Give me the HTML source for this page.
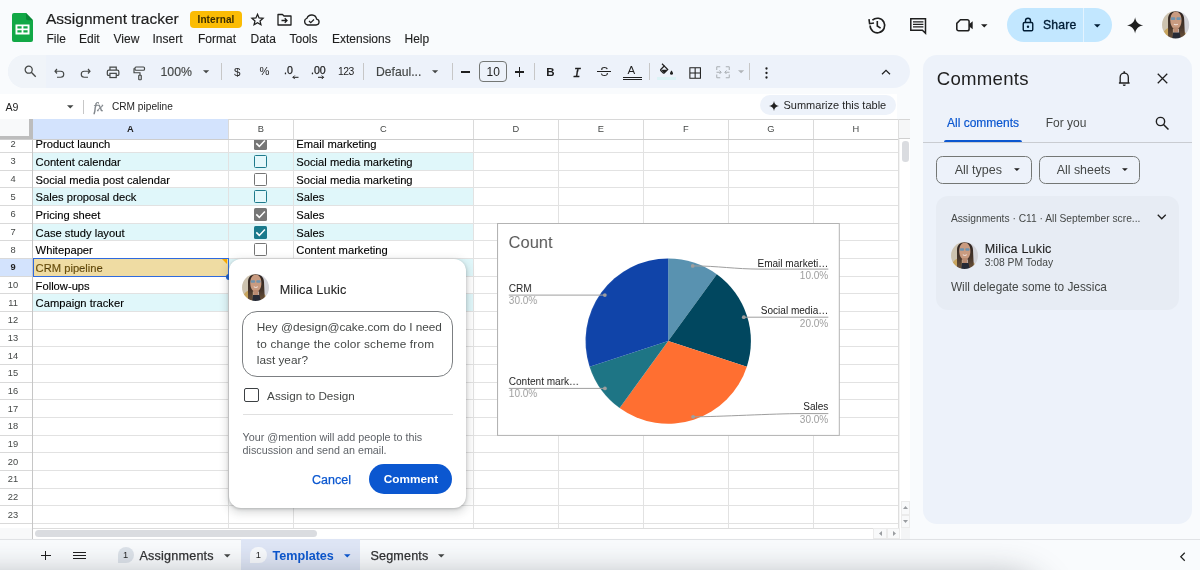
<!DOCTYPE html>
<html><head><meta charset="utf-8"><title>Assignment tracker</title>
<style>
*{box-sizing:border-box;margin:0;padding:0}
html,body{width:1200px;height:570px;overflow:hidden;background:#f9fbfd;font-family:"Liberation Sans",sans-serif;color:#1f1f1f}
.abs{position:absolute}
#app{position:relative;width:1200px;height:570px;overflow:hidden;will-change:transform}
.t{position:absolute;white-space:nowrap;line-height:1}
svg{position:absolute;overflow:visible}
/* header */
#title{left:46px;top:11px;font-size:15.5px;color:#1f1f1f;-webkit-text-stroke:.2px #1f1f1f}
.menu{top:33px;font-size:12px;color:#1f1f1f;-webkit-text-stroke:.12px #1f1f1f}
#badge{left:190px;top:11px;width:52px;height:17px;background:#fbbc04;border-radius:4px}
#badge span{position:absolute;left:0;right:0;top:3.3px;text-align:center;font-size:10px;font-weight:700;color:#3a2c00;letter-spacing:.1px}
/* toolbar */
#toolbar{left:8px;top:55px;width:902px;height:33px;background:#edf2fa;border-radius:17px}
.sep{position:absolute;top:63px;width:1px;height:17px;background:#c7c7c7}
.tb{font-size:11.6px;color:#444746}
/* formula */
#fbar{left:0;top:94px;width:896.5px;height:25px;background:#fff}
/* grid */
#grid{left:0;top:119px;width:910px;height:420px;background:#fff;overflow:hidden}
.colh{position:absolute;top:0;height:20px;border-right:1px solid #d5d5d5;border-bottom:1px solid #c8c8c8;border-top:1px solid #d5d5d5;background:#fff;font-size:9.4px;color:#444746;text-align:center;line-height:19px}
.rowh{position:absolute;left:0;width:33px;border-right:1px solid #c8c8c8;border-bottom:1px solid #d9d9d9;background:#fff;font-size:9.2px;color:#444746;text-align:center}
.hl{position:absolute;left:33px;height:1px;background:#e1e1e1;width:865px}
.vl{position:absolute;top:20px;width:1px;background:#e1e1e1;height:388px}
.band{position:absolute;left:33px;width:440px;background:#e0f7fa}
.ct{position:absolute;font-size:11.2px;color:#000;white-space:nowrap;line-height:1;-webkit-text-stroke:.12px #000}
.cb{position:absolute;width:13px;height:13px;border-radius:2px}
</style></head>
<body><div id="app">
<!--DEFS-->
<svg width="0" height="0" style="left:0;top:0"><defs>
<clipPath id="avc"><circle cx="13.500" cy="13.500" r="13.500"/></clipPath>
<filter id="avb" x="-10%" y="-10%" width="120%" height="120%"><feGaussianBlur stdDeviation=".5"/></filter>
<linearGradient id="avh" x1="0" y1="0" x2="0" y2="1"><stop offset="0" stop-color="#2b221e"/><stop offset=".6" stop-color="#46352b"/><stop offset="1" stop-color="#6b523a"/></linearGradient>
</defs></svg>
<!--/DEFS-->
<!--HEADER-->
<!-- sheets logo -->
<svg class="abs" style="left:12.3px;top:13.2px" width="21" height="29" viewBox="0 0 21 29">
  <path d="M2 0h12L21 7.2V27a2 2 0 0 1-2 2H2a2 2 0 0 1-2-2V2a2 2 0 0 1 2-2z" fill="#12a846"/>
  <path d="M14 0L21 7.2h-5.200a1.800 1.800 0 0 1-1.800-1.800z" fill="#0b8737"/>
  <path d="M3.500 11.400h14v10H3.500z M5.400 13.300v2.200h4.200v-2.200z M11.400 13.300v2.200h4.200v-2.200z M5.400 17.300v2.200h4.200v-2.200z M11.400 17.300v2.200h4.200v-2.200z" fill="#fff" fill-rule="evenodd"/>
</svg>
<div class="t" id="title">Assignment tracker</div>
<div class="abs" id="badge"><span>Internal</span></div>
<!-- star -->
<svg style="left:250px;top:12px" width="15" height="15" viewBox="0 0 24 24"><path d="M12 3.6l2.5 5.9 6.4.55-4.85 4.2 1.45 6.25L12 17.2l-5.5 3.3 1.45-6.25L3.1 10.05l6.4-.55z" fill="none" stroke="#1f1f1f" stroke-width="2" stroke-linejoin="miter"/></svg>
<!-- folder move -->
<svg style="left:277px;top:13px" width="15" height="13" viewBox="0 0 30 26"><path d="M2 3h9l3 3h14v18H2z" fill="none" stroke="#1f1f1f" stroke-width="2.6" stroke-linejoin="round"/><path d="M9 15h10M15.5 10.5L20 15l-4.500 4.500" fill="none" stroke="#1f1f1f" stroke-width="2.6"/></svg>
<!-- cloud -->
<svg style="left:303px;top:14px" width="17" height="12" viewBox="0 0 34 24"><path d="M9 22h17a6 6 0 0 0 1.200-11.900A10 10 0 0 0 8 8.500 7 7 0 0 0 9 22z" fill="none" stroke="#1f1f1f" stroke-width="2.600" stroke-linejoin="round"/><path d="M12 14l3.500 3.500 6.500-6.500" fill="none" stroke="#1f1f1f" stroke-width="2.400"/></svg>
<div class="t menu" style="left:46.500px">File</div>
<div class="t menu" style="left:79px">Edit</div>
<div class="t menu" style="left:113.500px">View</div>
<div class="t menu" style="left:152.500px">Insert</div>
<div class="t menu" style="left:198px">Format</div>
<div class="t menu" style="left:250.500px">Data</div>
<div class="t menu" style="left:289.500px">Tools</div>
<div class="t menu" style="left:332px">Extensions</div>
<div class="t menu" style="left:404.500px">Help</div>
<!-- history -->
<svg style="left:867.5px;top:16.6px" width="18" height="17" viewBox="0 0 18 17"><path d="M2.100 8.500A7.300 7.300 0 1 0 4.400 3.200" fill="none" stroke="#1f1f1f" stroke-width="1.600"/><path d="M1 2.200l.600 4.500 4.400-.700" fill="none" stroke="#1f1f1f" stroke-width="1.600"/><path d="M9.300 4v5l3.300 2.200" fill="none" stroke="#1f1f1f" stroke-width="1.600"/></svg>
<!-- comment icon -->
<svg style="left:910px;top:17.500px" width="16.500" height="16" viewBox="0 0 16.500 16"><path d="M.800 .800H15.500V15.200L12.400 12.300H.800z" fill="none" stroke="#1f1f1f" stroke-width="1.500" stroke-linejoin="miter"/><path d="M3 3.900h10.400M3 6.400h10.400M3 8.900h10.400" stroke="#1f1f1f" stroke-width="1.150"/></svg>
<!-- video -->
<svg style="left:955.600px;top:19.400px" width="17" height="12.500" viewBox="0 0 17 12.500"><path d="M4.400 .800H11.300a1.800 1.800 0 0 1 1.800 1.800V9.900a1.800 1.800 0 0 1-1.800 1.800H2.600A1.800 1.800 0 0 1 .800 9.900V4.400z" fill="none" stroke="#1f1f1f" stroke-width="1.550" stroke-linejoin="round"/><path d="M13 5.300l3.700-3v7.900l-3.700-3z" fill="#1f1f1f"/></svg>
<svg style="left:981px;top:23.5px" width="6.5" height="3.5" viewBox="0 0 8 4"><path d="M0 0h8L4 4z" fill="#1f1f1f"/></svg>
<!-- share -->
<div class="abs" style="left:1007px;top:8.2px;width:104.5px;height:33.6px;border-radius:17px;background:#c2e7ff"></div>
<div class="abs" style="left:1083px;top:8px;width:1px;height:34px;background:#e3f3ff"></div>
<svg style="left:1022px;top:17px" width="12" height="15" viewBox="0 0 24 30"><rect x="2.500" y="11" width="19" height="16.500" rx="2.500" fill="none" stroke="#001d35" stroke-width="2.800"/><path d="M7 11V7.500a5 5 0 0 1 10 0V11" fill="none" stroke="#001d35" stroke-width="2.800"/><circle cx="12" cy="19.500" r="2.400" fill="#001d35"/></svg>
<div class="t" style="left:1043px;top:18.500px;font-size:12.200px;color:#001d35;-webkit-text-stroke:.35px #001d35;letter-spacing:.2px">Share</div>
<svg style="left:1094.2px;top:24px" width="6.5" height="3.5" viewBox="0 0 8 4"><path d="M0 0h8L4 4z" fill="#001d35"/></svg>
<!-- gemini spark -->
<svg style="left:1127px;top:17px" width="16.2" height="16.8" viewBox="0 0 36 36"><path d="M18 0c1 10 8 17 18 18-10 1-17 8-18 18-1-10-8-17-18-18 10-1 17-8 18-18z" fill="#1f1f1f"/></svg>
<!-- avatar -->
<svg style="left:1162px;top:11.2px" width="27.2" height="27.6" viewBox="0 0 27 27" preserveAspectRatio="none"><g clip-path="url(#avc)"><g filter="url(#avb)">
<rect x="-2" y="-2" width="16" height="31" fill="#cdc3b0"/><rect x="13.500" y="-2" width="16" height="31" fill="#d3d3d8"/>
<path d="M0 28c.5-7 3-10.500 7-11.500h3.500v11.500z" fill="#c8a55f"/><path d="M19 18.500c3 .500 5.500 3 6.500 8.500h-6.500z" fill="#c2a062"/>
<path d="M6 26V8C6 3 9 .2 13.800.2S22 3 22 8l.8 17-6 1.500v-9h-6v9z" fill="url(#avh)"/>
<path d="M8.200 9c0-5 2.300-8.500 5.600-8.500s5.600 3.500 5.600 8.500c0 5-2.300 8.700-5.600 8.700S8.200 14 8.200 9z" fill="#c99b80"/>
<rect x="11.300" y="16" width="5" height="5" fill="#b98a70"/>
<path d="M11 21h6.500l1.500 7h-9z" fill="#262a36"/>
<rect x="8.800" y="6.200" width="4.300" height="2.500" rx=".9" fill="#6f93ad"/><rect x="14.300" y="6.200" width="4.300" height="2.500" rx=".9" fill="#6f93ad"/>
<path d="M11.800 12.800q2 1.400 4 0" stroke="#f4e6e0" stroke-width="1" fill="none"/>
</g></g></svg>
<!--/HEADER-->
<!--TOOLBAR-->
<div class="abs" id="toolbar"></div>
<div class="abs" style="left:8px;top:55px;width:38px;height:33px;border-radius:17px 0 0 17px;background:#f0f4f9"></div>
<!-- search -->
<svg style="left:24px;top:65.300px" width="12.500" height="12.500" viewBox="0 0 24 24"><circle cx="9" cy="9" r="6.800" fill="none" stroke="#444746" stroke-width="2.400"/><path d="M14 14l8.500 8.500" stroke="#444746" stroke-width="2.600"/></svg>
<!-- undo -->
<svg style="left:53.500px;top:68px" width="11" height="10" viewBox="0 0 22 20"><path d="M6 2L2 6.500 6 11M2 6.500h11.500a6 6 0 0 1 0 12H6" fill="none" stroke="#444746" stroke-width="2.300"/></svg>
<!-- redo -->
<svg style="left:80px;top:68px" width="11" height="10" viewBox="0 0 22 20"><path d="M16 2l4 4.500-4 4.500M20 6.500H8.500a6 6 0 0 0 0 12H16" fill="none" stroke="#444746" stroke-width="2.300"/></svg>
<!-- print -->
<svg style="left:105.700px;top:66px" width="14.200" height="12.600" viewBox="0 0 26 24"><path d="M7 8V2h12v6M7 18H4.500A2.500 2.500 0 0 1 2 15.500V11a3 3 0 0 1 3-3h16a3 3 0 0 1 3 3v4.500a2.500 2.500 0 0 1-2.500 2.500H19" fill="none" stroke="#444746" stroke-width="2.300"/><rect x="7" y="14" width="12" height="8" fill="none" stroke="#444746" stroke-width="2.300"/></svg>
<!-- paint format -->
<svg style="left:132.500px;top:65.500px" width="13" height="15" viewBox="0 0 26 30"><rect x="4" y="2" width="19" height="6.500" rx="2" fill="none" stroke="#444746" stroke-width="2.300"/><path d="M4 5.500H2v8h12v5" fill="none" stroke="#444746" stroke-width="2.300"/><rect x="11.500" y="18.500" width="5" height="9" rx="1" fill="none" stroke="#444746" stroke-width="2.300"/></svg>
<div class="t tb" style="left:160.500px;top:66.300px;font-size:12.300px;-webkit-text-stroke:.15px #444746">100%</div>
<svg style="left:203px;top:69.800px" width="6.200" height="3.400" viewBox="0 0 8 4"><path d="M0 0h8L4 4z" fill="#444746"/></svg>
<div class="sep" style="left:221px"></div>
<div class="t tb" style="left:234px;top:65.700px;font-size:11.700px;color:#1f1f1f">$</div>
<div class="t tb" style="left:259.500px;top:65.700px;font-size:11.200px;color:#1f1f1f">%</div>
<div class="t tb" style="left:284px;top:64.500px;font-size:10.600px;color:#1f1f1f;-webkit-text-stroke:.25px #1f1f1f">.0</div>
<svg style="left:291.500px;top:74.600px" width="6.500" height="4.600" viewBox="0 0 13 9"><path d="M13 4.500H1.500M5.500 1L2 4.500 5.500 8" fill="none" stroke="#1f1f1f" stroke-width="2"/></svg>
<div class="t tb" style="left:311px;top:64.500px;font-size:10.600px;color:#1f1f1f;-webkit-text-stroke:.25px #1f1f1f">.00</div>
<svg style="left:318px;top:74.600px" width="6.500" height="4.600" viewBox="0 0 13 9"><path d="M0 4.500h11.500M7.500 1L11 4.500 7.500 8" fill="none" stroke="#1f1f1f" stroke-width="2"/></svg>
<div class="t tb" style="left:338px;top:67.400px;font-size:10.400px;letter-spacing:-.5px;color:#1f1f1f">123</div>
<div class="sep" style="left:363px"></div>
<div class="t tb" style="left:376px;top:66px;font-size:12.200px;-webkit-text-stroke:.15px #444746">Defaul...</div>
<svg style="left:432px;top:69.800px" width="6.200" height="3.400" viewBox="0 0 8 4"><path d="M0 0h8L4 4z" fill="#444746"/></svg>
<div class="sep" style="left:452px"></div>
<div class="abs" style="left:461px;top:71.300px;width:9px;height:1.600px;background:#1f1f1f"></div>
<div class="abs" style="left:479px;top:61px;width:28px;height:21px;border:1px solid #747775;border-radius:4px;background:#edf2fa"></div>
<div class="t tb" style="left:486.500px;top:66px;font-size:12px;color:#1f1f1f">10</div>
<div class="abs" style="left:515px;top:71.300px;width:9.400px;height:1.600px;background:#1f1f1f"></div>
<div class="abs" style="left:518.900px;top:67.400px;width:1.600px;height:9.400px;background:#1f1f1f"></div>
<div class="sep" style="left:534px"></div>
<div class="t tb" style="left:546.200px;top:67px;font-size:11.500px;font-weight:700;color:#1f1f1f">B</div>
<div class="t tb" style="left:573px;top:66.500px;font-size:13.500px;font-style:italic;font-family:'Liberation Mono',monospace;color:#1f1f1f;-webkit-text-stroke:.3px #1f1f1f">I</div>
<!-- strikethrough -->
<div class="t tb" style="left:600.200px;top:66.300px;font-size:12.300px;color:#1f1f1f">S</div>
<div class="abs" style="left:597px;top:70.800px;width:14px;height:1.500px;background:#1f1f1f;box-shadow:0 -1px 0 #edf2fa,0 1px 0 #edf2fa"></div>
<!-- text color -->
<div class="t tb" style="left:627.500px;top:65px;font-size:11.500px;color:#1f1f1f">A</div>
<div class="abs" style="left:622.500px;top:76.500px;width:19px;height:3px;border-top:1px solid #1f1f1f;border-bottom:1px solid #1f1f1f"></div>
<div class="sep" style="left:649px"></div>
<!-- fill -->
<svg style="left:660px;top:62.800px" width="14" height="13" viewBox="0 0 28 26"><path d="M4 1.500l11.500 11.500-7 7a1.500 1.500 0 0 1-2 0L1.500 15a1.500 1.500 0 0 1 0-2l8-8" fill="none" stroke="#1f1f1f" stroke-width="2.300"/><path d="M2.500 13.500h12.500L8 20z" fill="#1f1f1f"/><path d="M23 15s3 3.500 3 5.500a3 3 0 0 1-6 0c0-2 3-5.500 3-5.500z" fill="#1f1f1f"/></svg>
<div class="abs" style="left:657px;top:76.700px;width:19px;height:3px;background:#dcf3f6"></div>
<!-- borders -->
<svg style="left:689px;top:66.600px" width="12.300" height="12" viewBox="0 0 25 25"><path d="M1.500 1.500h22v22h-22zM12.500 1.500v22M1.500 12.500h22" fill="none" stroke="#1f1f1f" stroke-width="2.200"/></svg>
<!-- merge (disabled) -->
<svg style="left:716px;top:66px" width="14" height="12.500" viewBox="0 0 28 25"><path d="M1.500 8V1.500h7M19.500 1.500h7V8M1.500 17v6.500h7M19.500 23.500h7V17M1 12.500h9M7 9l3.500 3.500L7 16M27 12.500h-9M21 9l-3.500 3.500L21 16" fill="none" stroke="#a9aeb3" stroke-width="2"/></svg>
<svg style="left:737.500px;top:69.800px" width="6.200" height="3.400" viewBox="0 0 8 4"><path d="M0 0h8L4 4z" fill="#b0b4b8"/></svg>
<div class="sep" style="left:749px"></div>
<!-- more -->
<svg style="left:764.500px;top:66.500px" width="3" height="12" viewBox="0 0 6 24"><circle cx="3" cy="3" r="2.300" fill="#1f1f1f"/><circle cx="3" cy="12" r="2.300" fill="#1f1f1f"/><circle cx="3" cy="21" r="2.300" fill="#1f1f1f"/></svg>
<!-- chevron up -->
<svg style="left:881px;top:69px" width="10" height="6" viewBox="0 0 20 12"><path d="M2 10.500l8-8 8 8" fill="none" stroke="#1f1f1f" stroke-width="2.400"/></svg>
<!--/TOOLBAR-->
<!--FORMULA-->
<div class="abs" id="fbar"></div>
<div class="t" style="left:5.500px;top:101.600px;font-size:10.600px;color:#1f1f1f">A9</div>
<svg style="left:66.500px;top:105px" width="6.500" height="3.500" viewBox="0 0 8 4"><path d="M0 0h8L4 4z" fill="#444746"/></svg>
<div class="abs" style="left:83px;top:99.700px;width:1px;height:14.500px;background:#c7c7c7"></div>
<div class="t" style="left:93.500px;top:99.800px;font-size:13.500px;font-style:italic;font-family:'Liberation Serif',serif;color:#80868b;-webkit-text-stroke:.3px #80868b">fx</div>
<div class="t" style="left:112px;top:101.900px;font-size:10.150px;color:#1f1f1f">CRM pipeline</div>
<div class="abs" style="left:760px;top:95px;width:136px;height:20px;border-radius:10px;background:#edf2fa"></div>
<svg style="left:768.500px;top:100.500px" width="10" height="10" viewBox="0 0 36 36"><path d="M18 0c1 10 8 17 18 18-10 1-17 8-18 18-1-10-8-17-18-18 10-1 17-8 18-18z" fill="#1f1f1f"/></svg>
<div class="t" style="left:783.500px;top:100px;font-size:11px;color:#1f1f1f">Summarize this table</div>
<!--/FORMULA-->
<!--GRID-->
<div class="abs" style="left:0;top:119px;width:910px;height:420px;background:#fff"></div>
<div class="abs" style="left:32.5px;top:152.65px;width:440.75px;height:17.66px;background:#e0f7fa"></div>
<div class="abs" style="left:32.5px;top:187.98px;width:440.75px;height:17.66px;background:#e0f7fa"></div>
<div class="abs" style="left:32.5px;top:223.31px;width:440.75px;height:17.66px;background:#e0f7fa"></div>
<div class="abs" style="left:32.5px;top:258.64px;width:440.75px;height:17.66px;background:#e0f7fa"></div>
<div class="abs" style="left:32.5px;top:293.97px;width:440.75px;height:17.66px;background:#e0f7fa"></div>
<div class="abs" style="left:0;top:152.15px;width:898.5px;height:1px;background:#e2e2e2"></div>
<div class="abs" style="left:0;top:169.81px;width:898.5px;height:1px;background:#e2e2e2"></div>
<div class="abs" style="left:0;top:187.48px;width:898.5px;height:1px;background:#e2e2e2"></div>
<div class="abs" style="left:0;top:205.15px;width:898.5px;height:1px;background:#e2e2e2"></div>
<div class="abs" style="left:0;top:222.81px;width:898.5px;height:1px;background:#e2e2e2"></div>
<div class="abs" style="left:0;top:240.47px;width:898.5px;height:1px;background:#e2e2e2"></div>
<div class="abs" style="left:0;top:258.14px;width:898.5px;height:1px;background:#e2e2e2"></div>
<div class="abs" style="left:0;top:275.81px;width:898.5px;height:1px;background:#e2e2e2"></div>
<div class="abs" style="left:0;top:293.47px;width:898.5px;height:1px;background:#e2e2e2"></div>
<div class="abs" style="left:0;top:311.13px;width:898.5px;height:1px;background:#e2e2e2"></div>
<div class="abs" style="left:0;top:328.80px;width:898.5px;height:1px;background:#e2e2e2"></div>
<div class="abs" style="left:0;top:346.47px;width:898.5px;height:1px;background:#e2e2e2"></div>
<div class="abs" style="left:0;top:364.13px;width:898.5px;height:1px;background:#e2e2e2"></div>
<div class="abs" style="left:0;top:381.79px;width:898.5px;height:1px;background:#e2e2e2"></div>
<div class="abs" style="left:0;top:399.46px;width:898.5px;height:1px;background:#e2e2e2"></div>
<div class="abs" style="left:0;top:417.12px;width:898.5px;height:1px;background:#e2e2e2"></div>
<div class="abs" style="left:0;top:434.79px;width:898.5px;height:1px;background:#e2e2e2"></div>
<div class="abs" style="left:0;top:452.46px;width:898.5px;height:1px;background:#e2e2e2"></div>
<div class="abs" style="left:0;top:470.12px;width:898.5px;height:1px;background:#e2e2e2"></div>
<div class="abs" style="left:0;top:487.78px;width:898.5px;height:1px;background:#e2e2e2"></div>
<div class="abs" style="left:0;top:505.45px;width:898.5px;height:1px;background:#e2e2e2"></div>
<div class="abs" style="left:0;top:523.12px;width:898.5px;height:1px;background:#e2e2e2"></div>
<div class="abs" style="left:227.75px;top:139px;width:1px;height:388.5px;background:#e2e2e2"></div>
<div class="abs" style="left:292.75px;top:139px;width:1px;height:388.5px;background:#e2e2e2"></div>
<div class="abs" style="left:472.75px;top:139px;width:1px;height:388.5px;background:#e2e2e2"></div>
<div class="abs" style="left:557.75px;top:139px;width:1px;height:388.5px;background:#e2e2e2"></div>
<div class="abs" style="left:642.75px;top:139px;width:1px;height:388.5px;background:#e2e2e2"></div>
<div class="abs" style="left:727.75px;top:139px;width:1px;height:388.5px;background:#e2e2e2"></div>
<div class="abs" style="left:812.75px;top:139px;width:1px;height:388.5px;background:#e2e2e2"></div>
<div class="abs" style="left:897.75px;top:139px;width:1px;height:388.5px;background:#e2e2e2"></div>
<div class="abs" style="left:0;top:139px;width:32.5px;height:388.5px;background:#fff;border-right:1px solid #c6c6c6"></div>
<div class="abs" style="left:0;top:152.15px;width:32px;height:1px;background:#d9d9d9"></div>
<div class="abs" style="left:0;top:169.81px;width:32px;height:1px;background:#d9d9d9"></div>
<div class="abs" style="left:0;top:187.48px;width:32px;height:1px;background:#d9d9d9"></div>
<div class="abs" style="left:0;top:205.15px;width:32px;height:1px;background:#d9d9d9"></div>
<div class="abs" style="left:0;top:222.81px;width:32px;height:1px;background:#d9d9d9"></div>
<div class="abs" style="left:0;top:240.47px;width:32px;height:1px;background:#d9d9d9"></div>
<div class="abs" style="left:0;top:258.14px;width:32px;height:1px;background:#d9d9d9"></div>
<div class="abs" style="left:0;top:275.81px;width:32px;height:1px;background:#d9d9d9"></div>
<div class="abs" style="left:0;top:293.47px;width:32px;height:1px;background:#d9d9d9"></div>
<div class="abs" style="left:0;top:311.13px;width:32px;height:1px;background:#d9d9d9"></div>
<div class="abs" style="left:0;top:328.80px;width:32px;height:1px;background:#d9d9d9"></div>
<div class="abs" style="left:0;top:346.47px;width:32px;height:1px;background:#d9d9d9"></div>
<div class="abs" style="left:0;top:364.13px;width:32px;height:1px;background:#d9d9d9"></div>
<div class="abs" style="left:0;top:381.79px;width:32px;height:1px;background:#d9d9d9"></div>
<div class="abs" style="left:0;top:399.46px;width:32px;height:1px;background:#d9d9d9"></div>
<div class="abs" style="left:0;top:417.12px;width:32px;height:1px;background:#d9d9d9"></div>
<div class="abs" style="left:0;top:434.79px;width:32px;height:1px;background:#d9d9d9"></div>
<div class="abs" style="left:0;top:452.46px;width:32px;height:1px;background:#d9d9d9"></div>
<div class="abs" style="left:0;top:470.12px;width:32px;height:1px;background:#d9d9d9"></div>
<div class="abs" style="left:0;top:487.78px;width:32px;height:1px;background:#d9d9d9"></div>
<div class="abs" style="left:0;top:505.45px;width:32px;height:1px;background:#d9d9d9"></div>
<div class="abs" style="left:0;top:523.12px;width:32px;height:1px;background:#d9d9d9"></div>
<div class="abs" style="left:0;top:258.64px;width:32px;height:17.16px;background:#d3e3fd"></div>
<div class="t" style="left:0;width:26px;text-align:center;top:139.79px;font-size:9.3px;color:#444746">2</div>
<div class="t" style="left:0;width:26px;text-align:center;top:157.45px;font-size:9.3px;color:#444746">3</div>
<div class="t" style="left:0;width:26px;text-align:center;top:175.12px;font-size:9.3px;color:#444746">4</div>
<div class="t" style="left:0;width:26px;text-align:center;top:192.78px;font-size:9.3px;color:#444746">5</div>
<div class="t" style="left:0;width:26px;text-align:center;top:210.45px;font-size:9.3px;color:#444746">6</div>
<div class="t" style="left:0;width:26px;text-align:center;top:228.11px;font-size:9.3px;color:#444746">7</div>
<div class="t" style="left:0;width:26px;text-align:center;top:245.78px;font-size:9.3px;color:#444746">8</div>
<div class="t" style="left:0;width:26px;text-align:center;top:263.44px;font-size:9.3px;color:#444746;font-weight:700;color:#1f1f1f">9</div>
<div class="t" style="left:0;width:26px;text-align:center;top:281.11px;font-size:9.3px;color:#444746">10</div>
<div class="t" style="left:0;width:26px;text-align:center;top:298.77px;font-size:9.3px;color:#444746">11</div>
<div class="t" style="left:0;width:26px;text-align:center;top:316.44px;font-size:9.3px;color:#444746">12</div>
<div class="t" style="left:0;width:26px;text-align:center;top:334.10px;font-size:9.3px;color:#444746">13</div>
<div class="t" style="left:0;width:26px;text-align:center;top:351.77px;font-size:9.3px;color:#444746">14</div>
<div class="t" style="left:0;width:26px;text-align:center;top:369.43px;font-size:9.3px;color:#444746">15</div>
<div class="t" style="left:0;width:26px;text-align:center;top:387.09px;font-size:9.3px;color:#444746">16</div>
<div class="t" style="left:0;width:26px;text-align:center;top:404.76px;font-size:9.3px;color:#444746">17</div>
<div class="t" style="left:0;width:26px;text-align:center;top:422.43px;font-size:9.3px;color:#444746">18</div>
<div class="t" style="left:0;width:26px;text-align:center;top:440.09px;font-size:9.3px;color:#444746">19</div>
<div class="t" style="left:0;width:26px;text-align:center;top:457.76px;font-size:9.3px;color:#444746">20</div>
<div class="t" style="left:0;width:26px;text-align:center;top:475.42px;font-size:9.3px;color:#444746">21</div>
<div class="t" style="left:0;width:26px;text-align:center;top:493.08px;font-size:9.3px;color:#444746">22</div>
<div class="t" style="left:0;width:26px;text-align:center;top:510.75px;font-size:9.3px;color:#444746">23</div>
<div class="abs" style="left:32.5px;top:258.44px;width:196.5px;height:18.36px;background:#efdca3;border:1.5px solid #2f6ade"></div>
<div class="abs" style="left:222px;top:259.44px;width:0;height:0;border-left:5.5px solid transparent;border-top:5.5px solid #f9ab00"></div>
<div class="abs" style="left:225.5px;top:273.81px;width:6px;height:6px;border-radius:50%;background:#1a5fd0"></div>
<div class="ct" style="left:35.6px;top:139.29px">Product launch</div>
<div class="ct" style="left:35.6px;top:156.95px">Content calendar</div>
<div class="ct" style="left:35.6px;top:174.62px">Social media post calendar</div>
<div class="ct" style="left:35.6px;top:192.28px">Sales proposal deck</div>
<div class="ct" style="left:35.6px;top:209.95px">Pricing sheet</div>
<div class="ct" style="left:35.6px;top:227.61px">Case study layout</div>
<div class="ct" style="left:35.6px;top:245.28px">Whitepaper</div>
<div class="ct" style="left:35.6px;top:262.94px;color:#7a5a0a">CRM pipeline</div>
<div class="ct" style="left:35.6px;top:280.61px">Follow-ups</div>
<div class="ct" style="left:35.6px;top:298.27px">Campaign tracker</div>
<div class="ct" style="left:296.3px;top:139.29px">Email marketing</div>
<div class="ct" style="left:296.3px;top:156.95px">Social media marketing</div>
<div class="ct" style="left:296.3px;top:174.62px">Social media marketing</div>
<div class="ct" style="left:296.3px;top:192.28px">Sales</div>
<div class="ct" style="left:296.3px;top:209.95px">Sales</div>
<div class="ct" style="left:296.3px;top:227.61px">Sales</div>
<div class="ct" style="left:296.3px;top:245.28px">Content marketing</div>
<div class="abs" style="left:254.20px;top:137.29px;width:13px;height:13px;border-radius:1.5px;background:#767676"></div>
<svg style="left:254.20px;top:137.29px" width="13" height="13" viewBox="0 0 13 13"><path d="M2.3 6.4l3 3 5.6-5.8" fill="none" stroke="#fff" stroke-width="1.5"/></svg>
<div class="abs" style="left:254.20px;top:154.95px;width:13px;height:13px;border:1.7px solid #1f7a8c;border-radius:1.5px;background:#e4f8fb"></div>
<div class="abs" style="left:254.20px;top:172.62px;width:13px;height:13px;border:1.7px solid #757575;border-radius:1.5px;background:#fff"></div>
<div class="abs" style="left:254.20px;top:190.28px;width:13px;height:13px;border:1.7px solid #1f7a8c;border-radius:1.5px;background:#e4f8fb"></div>
<div class="abs" style="left:254.20px;top:207.95px;width:13px;height:13px;border-radius:1.5px;background:#767676"></div>
<svg style="left:254.20px;top:207.95px" width="13" height="13" viewBox="0 0 13 13"><path d="M2.3 6.4l3 3 5.6-5.8" fill="none" stroke="#fff" stroke-width="1.5"/></svg>
<div class="abs" style="left:254.20px;top:225.61px;width:13px;height:13px;border-radius:1.5px;background:#1a7a8c"></div>
<svg style="left:254.20px;top:225.61px" width="13" height="13" viewBox="0 0 13 13"><path d="M2.3 6.4l3 3 5.6-5.8" fill="none" stroke="#fff" stroke-width="1.5"/></svg>
<div class="abs" style="left:254.20px;top:243.28px;width:13px;height:13px;border:1.7px solid #757575;border-radius:1.5px;background:#fff"></div>
<div class="abs" style="left:0;top:118.5px;width:899px;height:21px;background:#fff;border-top:1px solid #d8d8d8;border-bottom:1px solid #cdcdcd"></div>
<div class="abs" style="left:32.5px;top:119.3px;width:195.75px;height:19.4px;background:#d3e3fd"></div>
<div class="abs" style="left:227.75px;top:119px;width:1px;height:20px;background:#dadada"></div>
<div class="abs" style="left:292.75px;top:119px;width:1px;height:20px;background:#dadada"></div>
<div class="abs" style="left:472.75px;top:119px;width:1px;height:20px;background:#dadada"></div>
<div class="abs" style="left:557.75px;top:119px;width:1px;height:20px;background:#dadada"></div>
<div class="abs" style="left:642.75px;top:119px;width:1px;height:20px;background:#dadada"></div>
<div class="abs" style="left:727.75px;top:119px;width:1px;height:20px;background:#dadada"></div>
<div class="abs" style="left:812.75px;top:119px;width:1px;height:20px;background:#dadada"></div>
<div class="abs" style="left:897.75px;top:119px;width:1px;height:20px;background:#dadada"></div>
<div class="t" style="left:32.50px;width:195.75px;text-align:center;top:124.5px;font-size:9.3px;color:#444746;font-weight:700;color:#1f1f1f">A</div>
<div class="t" style="left:228.25px;width:65.00px;text-align:center;top:124.5px;font-size:9.3px;color:#444746">B</div>
<div class="t" style="left:293.25px;width:180.00px;text-align:center;top:124.5px;font-size:9.3px;color:#444746">C</div>
<div class="t" style="left:473.25px;width:85.00px;text-align:center;top:124.5px;font-size:9.3px;color:#444746">D</div>
<div class="t" style="left:558.25px;width:85.00px;text-align:center;top:124.5px;font-size:9.3px;color:#444746">E</div>
<div class="t" style="left:643.25px;width:85.00px;text-align:center;top:124.5px;font-size:9.3px;color:#444746">F</div>
<div class="t" style="left:728.25px;width:85.00px;text-align:center;top:124.5px;font-size:9.3px;color:#444746">G</div>
<div class="t" style="left:813.25px;width:85.00px;text-align:center;top:124.5px;font-size:9.3px;color:#444746">H</div>
<div class="abs" style="left:0;top:119.3px;width:32.6px;height:19.5px;background:#bdbdbd"></div>
<div class="abs" style="left:0;top:119.3px;width:29px;height:16.3px;background:#f8f9fa"></div>
<div class="abs" style="left:0;top:94px;width:910px;height:24.5px;background:#fff;z-index:0;display:none"></div>
<div class="abs" style="left:898.2px;top:119px;width:2.3px;height:420px;background:#f3f3f3;border-left:1px solid #dedede"></div>
<div class="abs" style="left:899.2px;top:119px;width:10.8px;height:20.3px;background:#f6f7f8;border-top:1px solid #d6d6d6;border-bottom:1px solid #d0d0d0"></div>
<div class="abs" style="left:0;top:527.5px;width:900px;height:11.5px;background:#fff;border-top:1px solid #dcdcdc"></div>
<div class="abs" style="left:0;top:528px;width:32.5px;height:11px;background:#f8f9fa;border-right:1px solid #c6c6c6"></div>
<div class="abs" style="left:35px;top:530px;width:282px;height:7px;border-radius:4px;background:#dadce0"></div>
<div class="abs" style="left:902.2px;top:141.2px;width:6.4px;height:21.2px;border-radius:3.2px;background:#dadce0"></div>
<div class="abs" style="left:900.5px;top:501px;width:9.5px;height:13.5px;background:#f8f9fa;border:1px solid #ebebeb"></div>
<div class="abs" style="left:900.5px;top:514.5px;width:9.5px;height:13.5px;background:#f8f9fa;border:1px solid #ebebeb"></div>
<svg style="left:903px;top:505.5px" width="5" height="3" viewBox="0 0 10 6"><path d="M0 6h10L5 0z" fill="#9a9da1"/></svg>
<svg style="left:903px;top:520px" width="5" height="3" viewBox="0 0 10 6"><path d="M0 0h10L5 6z" fill="#9a9da1"/></svg>
<div class="abs" style="left:873px;top:528px;width:14px;height:11px;background:#f8f9fa;border:1px solid #ebebeb"></div>
<div class="abs" style="left:886.5px;top:528px;width:13.5px;height:11px;background:#f8f9fa;border:1px solid #ebebeb"></div>
<svg style="left:878.5px;top:531px" width="3" height="5" viewBox="0 0 6 10"><path d="M6 0v10L0 5z" fill="#9a9da1"/></svg>
<svg style="left:892.5px;top:531px" width="3" height="5" viewBox="0 0 6 10"><path d="M0 0v10l6-5z" fill="#9a9da1"/></svg>
<div class="abs" style="left:900.5px;top:528px;width:9.5px;height:11px;background:#f4f5f6"></div>
<!--/GRID-->
<!--CHART-->
<svg style="left:497.00px;top:223.40px" width="342.80" height="212.90" viewBox="0 0 342.80 212.90" font-family="Liberation Sans, sans-serif">
<rect x="0.5" y="0.5" width="341.80" height="211.90" fill="#fff" stroke="#b3b3b3" stroke-width="1"/>
<path d="M171.20 118.10L171.20 35.40A82.70 82.70 0 0 1 219.81 51.19Z" fill="#5992b0"/>
<path d="M171.20 118.10L219.81 51.19A82.70 82.70 0 0 1 249.85 143.66Z" fill="#01475f"/>
<path d="M171.20 118.10L249.85 143.66A82.70 82.70 0 0 1 122.59 185.01Z" fill="#ff6f31"/>
<path d="M171.20 118.10L122.59 185.01A82.70 82.70 0 0 1 92.55 143.66Z" fill="#1e7585"/>
<path d="M171.20 118.10L92.55 143.66A82.70 82.70 0 0 1 171.20 35.40Z" fill="#1044a9"/>
<text x="11.60" y="24.60" font-size="16.5" fill="#595959">Count</text>
<text x="11.80" y="68.70" font-size="10.05" fill="#222">CRM</text>
<text x="11.80" y="81.40" font-size="10.05" fill="#9e9e9e">30.0%</text>
<path d="M11.80 72.10H107.80" stroke="#9e9e9e" stroke-width="1" fill="none"/>
<circle cx="107.80" cy="72.10" r="1.9" fill="#9e9e9e"/>
<text x="11.80" y="161.70" font-size="10.05" fill="#222">Content mark…</text>
<text x="11.80" y="174.50" font-size="10.05" fill="#9e9e9e">10.0%</text>
<path d="M11.80 165.40H107.90" stroke="#9e9e9e" stroke-width="1" fill="none"/>
<circle cx="107.90" cy="165.40" r="1.9" fill="#9e9e9e"/>
<text x="331.30" y="43.70" font-size="10.05" fill="#222" text-anchor="end">Email marketi…</text>
<text x="331.30" y="56.10" font-size="10.05" fill="#9e9e9e" text-anchor="end">10.0%</text>
<path d="M331.30 46.10H263.00C238.00 46.10 220.70 42.90 195.70 42.90" stroke="#9e9e9e" stroke-width="1" fill="none"/>
<circle cx="195.70" cy="42.90" r="1.9" fill="#9e9e9e"/>
<text x="331.30" y="91.30" font-size="10.05" fill="#222" text-anchor="end">Social media…</text>
<text x="331.30" y="103.90" font-size="10.05" fill="#9e9e9e" text-anchor="end">20.0%</text>
<path d="M331.30 94.20H246.80" stroke="#9e9e9e" stroke-width="1" fill="none"/>
<circle cx="246.80" cy="94.20" r="1.9" fill="#9e9e9e"/>
<text x="331.30" y="187.00" font-size="10.05" fill="#222" text-anchor="end">Sales</text>
<text x="331.30" y="200.10" font-size="10.05" fill="#9e9e9e" text-anchor="end">30.0%</text>
<path d="M331.30 190.60H303.00C278.00 190.60 221.10 193.80 196.10 193.80" stroke="#9e9e9e" stroke-width="1" fill="none"/>
<circle cx="196.10" cy="193.80" r="1.9" fill="#9e9e9e"/>
</svg>
<!--/CHART-->
<!--POPUP-->
<div class="abs" style="left:229.300px;top:258.600px;width:236.700px;height:249px;border-radius:12px;background:#fff;box-shadow:0 1px 3px rgba(60,64,67,.3),0 3px 8px 2px rgba(60,64,67,.18)"></div>
<svg style="left:242.1px;top:274px" width="27" height="27" viewBox="0 0 27 27" preserveAspectRatio="none"><g clip-path="url(#avc)"><g filter="url(#avb)">
<rect x="-2" y="-2" width="16" height="31" fill="#cdc3b0"/><rect x="13.500" y="-2" width="16" height="31" fill="#d3d3d8"/>
<path d="M0 28c.5-7 3-10.500 7-11.500h3.500v11.500z" fill="#c8a55f"/><path d="M19 18.500c3 .500 5.500 3 6.500 8.500h-6.500z" fill="#c2a062"/>
<path d="M6 26V8C6 3 9 .2 13.800.2S22 3 22 8l.8 17-6 1.500v-9h-6v9z" fill="url(#avh)"/>
<path d="M8.200 9c0-5 2.300-8.500 5.600-8.500s5.600 3.500 5.600 8.500c0 5-2.300 8.700-5.600 8.700S8.200 14 8.200 9z" fill="#c99b80"/>
<rect x="11.300" y="16" width="5" height="5" fill="#b98a70"/>
<path d="M11 21h6.500l1.500 7h-9z" fill="#262a36"/>
<rect x="8.800" y="6.200" width="4.300" height="2.500" rx=".9" fill="#6f93ad"/><rect x="14.300" y="6.200" width="4.300" height="2.500" rx=".9" fill="#6f93ad"/>
<path d="M11.800 12.800q2 1.400 4 0" stroke="#f4e6e0" stroke-width="1" fill="none"/>
</g></g></svg>
<div class="t" style="left:279.700px;top:283.500px;font-size:12.700px;color:#1f1f1f;letter-spacing:.1px;-webkit-text-stroke:.1px #1f1f1f">Milica Lukic</div>
<div class="abs" style="left:242.100px;top:311.400px;width:210.700px;height:65.600px;border:1px solid #7c7f82;border-radius:15px;background:#fff"></div>
<div class="abs" style="left:256.800px;top:318.700px;font-size:11.800px;line-height:16.850px;color:#444746;white-space:nowrap"><span style="letter-spacing:-.03px">Hey @design@cake.com do I need</span><br><span style="letter-spacing:.18px">to change the color scheme from</span><br>last year?</div>
<div class="abs" style="left:244px;top:387.700px;width:15.300px;height:14.600px;border:1.600px solid #3c4043;border-radius:2px;background:#fff"></div>
<div class="t" style="left:267.100px;top:389.700px;font-size:11.700px;color:#444746">Assign to Design</div>
<div class="abs" style="left:242.600px;top:413.800px;width:210px;height:1px;background:#e0e0e0"></div>
<div class="abs" style="left:242.600px;top:431.200px;font-size:10.750px;line-height:13.300px;color:#5f6368;white-space:nowrap">Your @mention will add people to this<br>discussion and send an email.</div>
<div class="t" style="left:312px;top:473.500px;font-size:12.500px;color:#0b57d0;-webkit-text-stroke:.25px #0b57d0">Cancel</div>
<div class="abs" style="left:369.300px;top:463.900px;width:83.200px;height:30.200px;border-radius:15.100px;background:#0b57d0"></div>
<div class="t" style="left:369.300px;width:83.200px;text-align:center;top:474.100px;font-size:11.800px;font-weight:700;color:#fff">Comment</div>
<!--/POPUP-->
<!--PANEL-->
<div class="abs" style="left:923.200px;top:55px;width:269px;height:468.500px;border-radius:14px;background:#edf2fa"></div>
<div class="t" style="left:936.800px;top:69.700px;font-size:18.600px;color:#1f1f1f;letter-spacing:.25px">Comments</div>
<!-- bell -->
<svg style="left:1117.400px;top:70.200px" width="14.500" height="16.800" viewBox="0 0 27 33"><path d="M3 25.500h21M5.500 25V14a8 8 0 0 1 16 0v11" fill="none" stroke="#1f1f1f" stroke-width="2.600"/><path d="M13.500 6V2.500" stroke="#1f1f1f" stroke-width="3.200"/><path d="M10.500 28.500h6a3 3 0 0 1-6 0z" fill="#1f1f1f"/></svg>
<!-- close -->
<svg style="left:1156.500px;top:72.800px" width="11" height="11" viewBox="0 0 22 22"><path d="M1.500 1.500l19 19M20.500 1.500l-19 19" stroke="#1f1f1f" stroke-width="2.500"/></svg>
<div class="t" style="left:947px;top:117px;font-size:12px;color:#0b57d0;-webkit-text-stroke:.2px #0b57d0">All comments</div>
<div class="t" style="left:1045.700px;top:117px;font-size:12px;color:#444746">For you</div>
<svg style="left:1155px;top:115.700px" width="14.500" height="14.500" viewBox="0 0 29 29"><circle cx="11" cy="11" r="8.300" fill="none" stroke="#1f1f1f" stroke-width="2.800"/><path d="M17 17l10 10" stroke="#1f1f1f" stroke-width="3"/></svg>
<div class="abs" style="left:923.200px;top:141.800px;width:269px;height:1px;background:#c9ccd1"></div>
<div class="abs" style="left:943.700px;top:139.800px;width:78.300px;height:2.600px;border-radius:2.600px 2.600px 0 0;background:#0b57d0"></div>
<!-- chips -->
<div class="abs" style="left:936.400px;top:156.400px;width:95.600px;height:27.200px;border:1px solid #747775;border-radius:6.500px"></div>
<div class="t" style="left:954.700px;top:163.800px;font-size:12.500px;color:#444746">All types</div>
<svg style="left:1014px;top:168.400px" width="5.800" height="3.200" viewBox="0 0 8 4"><path d="M0 0h8L4 4z" fill="#1f1f1f"/></svg>
<div class="abs" style="left:1038.700px;top:156.400px;width:101px;height:27.200px;border:1px solid #747775;border-radius:6.500px"></div>
<div class="t" style="left:1056.700px;top:163.800px;font-size:12.400px;color:#444746">All sheets</div>
<svg style="left:1121.600px;top:168.400px" width="5.800" height="3.200" viewBox="0 0 8 4"><path d="M0 0h8L4 4z" fill="#1f1f1f"/></svg>
<!-- card -->
<div class="abs" style="left:936.400px;top:196.200px;width:242.400px;height:113.600px;border-radius:12px;background:#e7ecf4"></div>
<div class="t" style="left:950.900px;top:213.800px;font-size:10.250px;color:#444746">Assignments · C11 · All September scre...</div>
<svg style="left:1156.700px;top:214.200px" width="9.500" height="5.500" viewBox="0 0 19 11"><path d="M1.500 1.500l8 8 8-8" fill="none" stroke="#1f1f1f" stroke-width="2.600"/></svg>
<svg style="left:950.9px;top:242.2px" width="27" height="27" viewBox="0 0 27 27" preserveAspectRatio="none"><g clip-path="url(#avc)"><g filter="url(#avb)">
<rect x="-2" y="-2" width="16" height="31" fill="#cdc3b0"/><rect x="13.500" y="-2" width="16" height="31" fill="#d3d3d8"/>
<path d="M0 28c.5-7 3-10.500 7-11.500h3.500v11.500z" fill="#c8a55f"/><path d="M19 18.500c3 .500 5.500 3 6.500 8.500h-6.500z" fill="#c2a062"/>
<path d="M6 26V8C6 3 9 .2 13.800.2S22 3 22 8l.8 17-6 1.500v-9h-6v9z" fill="url(#avh)"/>
<path d="M8.200 9c0-5 2.300-8.500 5.600-8.500s5.600 3.500 5.600 8.500c0 5-2.300 8.700-5.600 8.700S8.200 14 8.200 9z" fill="#c99b80"/>
<rect x="11.300" y="16" width="5" height="5" fill="#b98a70"/>
<path d="M11 21h6.500l1.500 7h-9z" fill="#262a36"/>
<rect x="8.800" y="6.200" width="4.300" height="2.500" rx=".9" fill="#6f93ad"/><rect x="14.300" y="6.200" width="4.300" height="2.500" rx=".9" fill="#6f93ad"/>
<path d="M11.800 12.800q2 1.400 4 0" stroke="#f4e6e0" stroke-width="1" fill="none"/>
</g></g></svg>
<div class="t" style="left:984.700px;top:243.300px;font-size:12.600px;color:#1f1f1f;letter-spacing:.15px;-webkit-text-stroke:.1px #1f1f1f">Milica Lukic</div>
<div class="t" style="left:984.700px;top:258.200px;font-size:10.300px;color:#444746">3:08 PM Today</div>
<div class="t" style="left:950.900px;top:281.700px;font-size:11.850px;color:#444746">Will delegate some to Jessica</div>
<!--/PANEL-->
<!--BOTTOM-->
<div class="abs" style="left:0;top:538.500px;width:1200px;height:31.500px;background:#f9fbfd;border-top:1px solid #e1e3e6"></div>
<div class="abs" style="left:240.500px;top:539.300px;width:119.500px;height:30.700px;background:#dfe6f6"></div>
<!-- plus -->
<div class="abs" style="left:41px;top:554.900px;width:9.500px;height:1.300px;background:#1f1f1f"></div>
<div class="abs" style="left:45.100px;top:550.800px;width:1.300px;height:9.500px;background:#1f1f1f"></div>
<!-- hamburger -->
<div class="abs" style="left:73.300px;top:551.700px;width:12.500px;height:1.400px;background:#1f1f1f"></div>
<div class="abs" style="left:73.300px;top:554.900px;width:12.500px;height:1.400px;background:#1f1f1f"></div>
<div class="abs" style="left:73.300px;top:558.100px;width:12.500px;height:1.400px;background:#1f1f1f"></div>
<!-- tab 1 -->
<div class="abs" style="left:117.500px;top:547px;width:16.300px;height:15.500px;border-radius:8px 8px 8px 0;background:#dde3ea"></div>
<div class="t" style="left:117.500px;width:16.300px;text-align:center;top:550.600px;font-size:9.300px;color:#1f1f1f">1</div>
<div class="t" style="left:139.500px;top:550.200px;font-size:12.600px;color:#303132;letter-spacing:.2px;-webkit-text-stroke:.25px #303132">Assignments</div>
<svg style="left:223.500px;top:554.300px" width="6.500" height="3.500" viewBox="0 0 8 4"><path d="M0 0h8L4 4z" fill="#444746"/></svg>
<!-- tab 2 -->
<div class="abs" style="left:250.300px;top:547px;width:16.300px;height:15.500px;border-radius:8px 8px 8px 0;background:#f8fafd"></div>
<div class="t" style="left:250.300px;width:16.300px;text-align:center;top:550.600px;font-size:9.300px;color:#1f1f1f">1</div>
<div class="t" style="left:272.500px;top:550.200px;font-size:12.600px;font-weight:700;color:#0b57d0">Templates</div>
<svg style="left:343.700px;top:554.300px" width="6.500" height="3.500" viewBox="0 0 8 4"><path d="M0 0h8L4 4z" fill="#0b57d0"/></svg>
<!-- tab 3 -->
<div class="t" style="left:370.500px;top:550.200px;font-size:12.600px;color:#303132;letter-spacing:.15px;-webkit-text-stroke:.25px #303132">Segments</div>
<svg style="left:437.700px;top:554.300px" width="6.500" height="3.500" viewBox="0 0 8 4"><path d="M0 0h8L4 4z" fill="#444746"/></svg>
<!-- collapse chevron -->
<svg style="left:1179.500px;top:551.500px" width="5.500" height="9.500" viewBox="0 0 11 19"><path d="M9.500 1.500l-8 8 8 8" fill="none" stroke="#1f1f1f" stroke-width="2.400"/></svg>
<!-- bottom shadow gradient -->
<div class="abs" style="left:-60px;top:588px;width:1092px;height:60px;border-radius:24px;background:#888;box-shadow:0 0 34px 12px rgba(40,44,52,.36);pointer-events:none"></div>
<!--/BOTTOM-->
</div></body></html>
